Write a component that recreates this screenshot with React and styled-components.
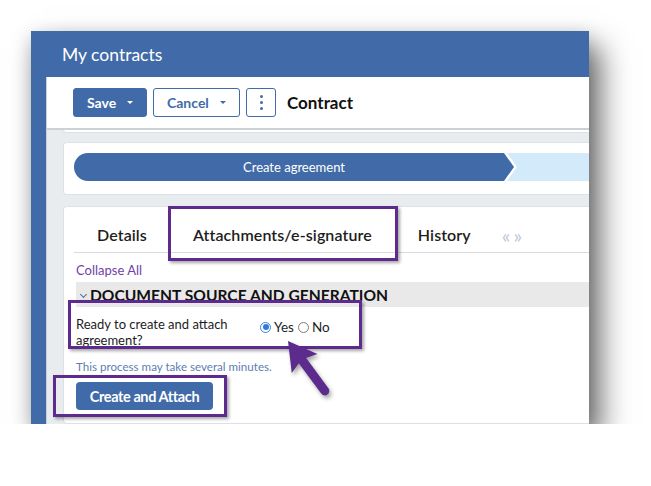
import React from 'react';
import styled, { createGlobalStyle } from 'styled-components';

const GlobalStyle = createGlobalStyle`
  body {
    margin: 0;
    background: #ffffff;
    font-family: Lato, "Open Sans", Arial, sans-serif;
  }
`;

const Window = styled.div`
  position: relative;
  margin: 31px 0 0 31px;
  width: 558px;
  height: 393px;
  background: #416ba8;
  display: flex;
  flex-direction: column;
  overflow: hidden;
  box-shadow: 12px 16px 28px rgba(0, 0, 0, 0.55), 0 6px 18px rgba(0, 0, 0, 0.2);
`;

const Header = styled.div`
  height: 46px;
  flex-shrink: 0;
  display: flex;
  align-items: center;
  padding-left: 31px;
  color: #ffffff;
  font-size: 17.5px;
`;

const Body = styled.div`
  flex: 1;
  margin-left: 15px;
  background: #e9ecef;
  border-left: 1px solid #c9cfd6;
  display: flex;
  flex-direction: column;
`;

const Toolbar = styled.div`
  height: 51px;
  flex-shrink: 0;
  background: #ffffff;
  border-bottom: 2px solid #cdd1d5;
  display: flex;
  align-items: center;
  gap: 6px;
  padding-left: 26px;
`;

const ToolButton = styled.button`
  height: 29px;
  width: ${(p) => p.$w}px;
  box-sizing: border-box;
  border-radius: 3px;
  border: 1px solid #416ba8;
  background: ${(p) => (p.$primary ? '#416ba8' : '#ffffff')};
  color: ${(p) => (p.$primary ? '#ffffff' : '#416ba8')};
  font-family: inherit;
  font-weight: 700;
  font-size: 14px;
  display: flex;
  align-items: center;
  justify-content: ${(p) => (p.$center ? 'center' : 'space-between')};
  padding: 0 ${(p) => (p.$center ? 0 : 13)}px;
`;

const Caret = styled.span`
  width: 0;
  height: 0;
  border-left: 3px solid transparent;
  border-right: 3px solid transparent;
  border-top: 3px solid currentColor;
`;

const Dots = styled.span`
  display: flex;
  flex-direction: column;
  gap: 3px;
  span {
    width: 3px;
    height: 3px;
    border-radius: 50%;
    background: #416ba8;
  }
`;

const PageTitle = styled.div`
  margin-left: 5px;
  font-size: 17px;
  font-weight: 700;
  color: #111;
`;

const Scroll = styled.div`
  flex: 1;
  padding-left: 16px;
  display: flex;
  flex-direction: column;
`;

const Sliver = styled.div`
  height: 2px;
  background: #ffffff;
  border: 1px solid #dde1e5;
  border-top: none;
  border-right: none;
  border-radius: 0 0 0 4px;
`;

const Card = styled.div`
  background: #ffffff;
  border: 1px solid #dde1e5;
  border-right: none;
  border-radius: 4px 0 0 4px;
  margin-top: ${(p) => p.$mt}px;
`;

const Steps = styled.div`
  display: flex;
  padding: 10px 0 13px 10px;
`;

const Step = styled.div`
  height: 28px;
  display: flex;
  align-items: center;
  justify-content: center;
  font-size: 13px;
  color: #ffffff;
  background: ${(p) => (p.$current ? '#416ba8' : '#d3eafb')};
  width: ${(p) => (p.$current ? '440px' : 'auto')};
  flex: ${(p) => (p.$current ? 'none' : '1')};
  border-radius: ${(p) => (p.$current ? '14px 0 0 14px' : '0')};
  margin-left: ${(p) => (p.$current ? 0 : -7)}px;
  clip-path: ${(p) =>
    p.$current
      ? 'polygon(0 0, calc(100% - 10px) 0, 100% 50%, calc(100% - 10px) 100%, 0 100%)'
      : 'polygon(0 0, 100% 0, 100% 100%, 0 100%, 10px 50%)'};
`;

const TabCard = styled(Card)`
  flex: 1;
  padding: 11px 0 0 10px;
`;

const Tabs = styled.div`
  display: flex;
  align-items: stretch;
  height: 34px;
  border-bottom: 1px solid #d8dce0;
`;

const Tab = styled.div`
  position: relative;
  padding: 0 23px;
  display: flex;
  align-items: center;
  font-size: 16px;
  letter-spacing: 0.1px;
  font-weight: 600;
  color: #1d1d1d;
  margin-bottom: -1px;
  border-bottom: 2px solid ${(p) => (p.$active ? '#416ba8' : 'transparent')};
`;

const Scrollers = styled.div`
  display: flex;
  align-items: center;
  padding-left: 8px;
  font-size: 20px;
  color: #c0c9d7;
  letter-spacing: 3px;
`;

const Highlight = styled.div`
  position: relative;
  &::after {
    content: '';
    position: absolute;
    top: ${(p) => p.$t}px;
    right: ${(p) => p.$r}px;
    bottom: ${(p) => p.$b}px;
    left: ${(p) => p.$l}px;
    border: 3px solid #5c2b8d;
    box-shadow: 2px 2px 3px rgba(0, 0, 0, 0.35);
    pointer-events: none;
  }
`;

const TabContent = styled.div`
  padding-left: 2px;
  display: flex;
  flex-direction: column;
  align-items: flex-start;
`;

const CollapseLink = styled.a`
  margin-top: 10px;
  font-size: 13px;
  line-height: 14px;
  color: #6f42a6;
`;

const SectionHeader = styled.div`
  margin-top: 5px;
  align-self: stretch;
  height: 25px;
  background: #e9e9e9;
  display: flex;
  align-items: center;
  padding-left: 4px;
  font-size: 15.6px;
  font-weight: 700;
  color: #111;
  text-transform: uppercase;
`;

const Chevron = styled.span`
  width: 4px;
  height: 4px;
  border-right: 1.5px solid #4a6fa0;
  border-bottom: 1.5px solid #4a6fa0;
  transform: rotate(45deg);
  margin: 0 4px 0 1px;
`;

const FieldRow = styled.div`
  margin-top: 9px;
  display: flex;
  align-items: flex-start;
`;

const FieldLabel = styled.div`
  width: 184px;
  font-size: 13px;
  line-height: 16px;
  color: #1d1d1d;
`;

const Options = styled.div`
  display: flex;
  align-items: center;
  height: 18px;
  margin-top: 2px;
  font-size: 13.5px;
  color: #1d1d1d;
`;

const Radio = styled.span`
  width: 11px;
  height: 11px;
  box-sizing: border-box;
  border-radius: 50%;
  border: 1px solid ${(p) => (p.$checked ? '#3b7fdc' : '#7d7d7d')};
  margin: 0 3px 0 ${(p) => p.$ml}px;
  display: flex;
  align-items: center;
  justify-content: center;
  &::after {
    content: '';
    width: 6px;
    height: 6px;
    border-radius: 50%;
    background: ${(p) => (p.$checked ? '#2f78e0' : 'transparent')};
  }
`;

const Hint = styled.div`
  margin-top: 12px;
  font-size: 11.6px;
  line-height: 14px;
  color: #5b7fb3;
`;

const ActionButton = styled.button`
  width: 137px;
  height: 28px;
  border: none;
  border-radius: 4px;
  background: #416ba8;
  color: #ffffff;
  font-family: inherit;
  font-size: 14.5px;
  font-weight: 700;
  letter-spacing: -0.4px;
`;

const ButtonWrap = styled(Highlight)`
  margin-top: 8px;
`;

const Arrow = styled.svg`
  position: absolute;
  left: 239px;
  top: 299px;
  overflow: visible;
  filter: drop-shadow(2px 3px 2px rgba(0, 0, 0, 0.35));
`;

export default function App() {
  return (
    <>
      <GlobalStyle />
      <Window>
        <Header>My contracts</Header>
        <Body>
          <Toolbar>
            <ToolButton $primary $w={74}>
              Save <Caret />
            </ToolButton>
            <ToolButton $w={87}>
              Cancel <Caret />
            </ToolButton>
            <ToolButton $w={30} $center>
              <Dots>
                <span />
                <span />
                <span />
              </Dots>
            </ToolButton>
            <PageTitle>Contract</PageTitle>
          </Toolbar>
          <Scroll>
            <Sliver />
            <Card $mt={9}>
              <Steps>
                <Step $current>Create agreement</Step>
                <Step />
              </Steps>
            </Card>
            <TabCard $mt={11}>
              <Tabs>
                <Tab>Details</Tab>
                <Highlight as={Tab} $active $t={-12} $r={-3} $b={-10} $l={-2}>
                  Attachments/e-signature
                </Highlight>
                <Tab>History</Tab>
                <Scrollers>«»</Scrollers>
              </Tabs>
              <TabContent>
                <CollapseLink>Collapse All</CollapseLink>
                <SectionHeader>
                  <Chevron />
                  Document source and generation
                </SectionHeader>
                <Highlight $t={-7} $r={-32} $b={-1} $l={-8}>
                  <FieldRow>
                    <FieldLabel>
                      Ready to create and attach
                      <br />
                      agreement?
                    </FieldLabel>
                    <Options>
                      <Radio $checked $ml={0} />
                      Yes
                      <Radio $ml={4} />
                      No
                    </Options>
                  </FieldRow>
                </Highlight>
                <Hint>This process may take several minutes.</Hint>
                <ButtonWrap $t={-7} $r={-14} $b={-7} $l={-23}>
                  <ActionButton>Create and Attach</ActionButton>
                </ButtonWrap>
              </TabContent>
            </TabCard>
          </Scroll>
        </Body>
        <Arrow width="80" height="80">
          <g transform="translate(18 11) rotate(-36.4)">
            <line x1="0" y1="18" x2="0" y2="62" stroke="#5c2b8d" strokeWidth="9" strokeLinecap="round" />
            <polygon points="0,0 16,28 0,23 -16,28" fill="#5c2b8d" />
          </g>
        </Arrow>
      </Window>
    </>
  );
}
